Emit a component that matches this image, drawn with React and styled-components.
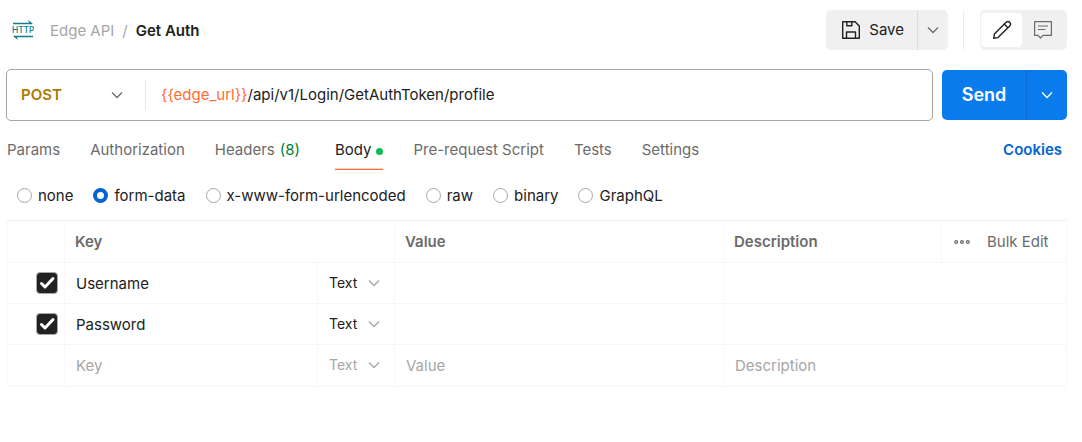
import React from 'react';
import styled, { createGlobalStyle, css } from 'styled-components';

const GlobalStyle = createGlobalStyle`
  *, *::before, *::after { box-sizing: border-box; }
  body {
    margin: 0;
    background: #fff;
    color: #212121;
    font: 400 15px/20px Inter, "Liberation Sans", sans-serif;
  }
  button, input, select { font: inherit; color: inherit; margin: 0; }
  button { border: 0; padding: 0; background: none; cursor: pointer; }
`;

const Page = styled.main`
  padding: 10px 15px 0 7px;
`;

const TopBar = styled.header`
  display: flex;
  align-items: center;
  height: 40px;
`;

const Breadcrumb = styled.nav`
  display: flex;
  align-items: center;
  gap: 8px;
  flex: 1;
  padding-top: 2px;
  color: #a6a6a6;
`;

const ProtocolIcon = styled.svg`
  width: 22px;
  height: 22px;
  margin: 0 8px 2px 5px;
  color: #0b7f8f;
`;

const CrumbLink = styled.a`
  color: inherit;
  text-decoration: none;
`;

const CrumbCurrent = styled.span`
  color: #212121;
  font-weight: 600;
`;

const SaveGroup = styled.div`
  display: flex;
  height: 40px;
  border-radius: 5px;
  background: #f0f0f0;
`;

const SaveButton = styled.button`
  display: flex;
  align-items: center;
  gap: 8px;
  padding: 0 13px 0 15px;
`;

const SaveMenu = styled.button`
  display: grid;
  place-items: center;
  width: 31px;
  border-left: 1px solid #dcdcdc;
  color: #6b6b6b;
`;

const Separator = styled.span`
  width: 1px;
  height: 40px;
  margin: 0 16px 0 15px;
  background: #ededed;
`;

const ViewToggle = styled.div`
  display: flex;
  padding: 3px 3px 3px 1px;
  height: 40px;
  border-radius: 5px;
  background: #f0f0f0;
`;

const ViewButton = styled.button`
  display: grid;
  place-items: center;
  width: ${(p) => (p.$active ? 41 : 42)}px;
  border-radius: 4px;
  background: ${(p) => (p.$active ? '#fff' : 'transparent')};
  color: ${(p) => (p.$active ? '#212121' : '#6b6b6b')};
`;

const RequestRow = styled.form`
  display: flex;
  align-items: center;
  gap: 9px;
  margin: 19px 0 0 -1px;
`;

const UrlBox = styled.div`
  display: flex;
  align-items: center;
  flex: 1;
  height: 52px;
  border: 1px solid #a6a6a6;
  border-radius: 5px;
`;

const SelectWrap = styled.label`
  display: flex;
  align-items: center;
  position: relative;
  height: 40px;
  color: #a6a6a6;
  svg {
    position: absolute;
    right: ${(p) => (p.$method ? 22 : 14)}px;
    pointer-events: none;
  }
  ${(p) => p.$method && css`
    width: 139px;
    height: 30px;
    border-right: 1px solid #e6e6e6;
    color: #6b6b6b;
  `}
`;

const Select = styled.select`
  appearance: none;
  width: 100%;
  border: 0;
  outline: 0;
  background: transparent;
  padding: 0 0 0 ${(p) => (p.$method ? 14 : 11)}px;
  ${(p) => (p.$method
    ? css`color: #ad7a03; font-weight: 600;`
    : css`color: ${p.$muted ? '#a6a6a6' : '#212121'}; font-size: 14px;`)}
`;

const UrlText = styled.div`
  flex: 1;
  padding-left: 15px;
  outline: 0;
`;

const Variable = styled.span`
  color: #ff6c37;
`;

const SendGroup = styled.div`
  display: flex;
  height: 50px;
  border-radius: 5px;
  background: #097bed;
  color: #fff;
`;

const SendButton = styled.button`
  width: 84px;
  font-size: 18px;
  font-weight: 600;
`;

const SendMenu = styled.button`
  display: grid;
  place-items: center;
  width: 41px;
  border-left: 1px solid #0a6bd0;
`;

const Tabs = styled.nav`
  display: flex;
  gap: 30px;
  margin-top: 19px;
`;

const Tab = styled.a`
  display: flex;
  align-items: center;
  gap: 5px;
  height: 30px;
  padding-bottom: 9px;
  color: ${(p) => (p.$active ? '#212121' : '#6b6b6b')};
  border-bottom: 1px solid ${(p) => (p.$active ? '#ff6c37' : 'transparent')};
  box-shadow: ${(p) => (p.$active ? 'inset 0 -1px #ffd3c3' : 'none')};
  text-decoration: none;
`;

const Count = styled.span`
  margin-right: 5px;
  color: #007f31;
`;

const Dot = styled.span`
  width: 7px;
  height: 7px;
  margin-top: 2px;
  border-radius: 50%;
  background: #0cbb52;
`;

const CookiesLink = styled.a`
  margin: 0 5px 0 auto;
  color: #0265d2;
  font-weight: 600;
  text-decoration: none;
`;

const BodyTypes = styled.fieldset`
  display: flex;
  gap: 20px;
  margin: 16px 0 0;
  padding: 0 0 0 10px;
  border: 0;
`;

const RadioLabel = styled.label`
  display: flex;
  align-items: center;
  gap: 6px;
`;

const Radio = styled.input`
  appearance: none;
  width: 15px;
  height: 15px;
  margin-bottom: 2px;
  border: 1px solid #a6a6a6;
  border-radius: 50%;
  background: #fff;
  &:checked { border: 4px solid #0265d2; }
`;

const Table = styled.table`
  width: 100%;
  margin-top: 14px;
  table-layout: fixed;
  border-collapse: collapse;
  border: 1px solid #ededed;
`;

const Col = styled.col`
  width: ${(p) => p.$width};
`;

const Row = styled.tr`
  height: 41px;
  &:last-child { height: 42px; }
`;

const HeadCell = styled.th`
  height: 42px;
  padding: 0 0 0 10px;
  border: 1px solid #f7f7f7;
  border-top-color: #ededed;
  color: #6b6b6b;
  font-weight: ${(p) => (p.$plain ? 400 : 600)};
  text-align: left;
`;

const Cell = styled.td`
  padding: 0;
  border: 1px solid #f7f7f7;
  vertical-align: top;
`;

const CheckCell = styled(Cell)`
  padding-left: 28px;
  vertical-align: middle;
`;

const Check = styled.label`
  display: grid;
  width: 22px;
  height: 22px;
  > * { grid-area: 1 / 1; }
  svg { pointer-events: none; }
`;

const CheckInput = styled.input`
  appearance: none;
  width: 22px;
  height: 22px;
  border: 1px solid #a6a6a6;
  border-radius: 4px;
  background: #fff;
  &:checked { background: #212121; }
`;

const CellInput = styled.input`
  display: block;
  width: 100%;
  height: 40px;
  padding: 0 11px;
  border: 0;
  outline: 0;
  background: transparent;
  &::placeholder { color: #a6a6a6; opacity: 1; }
`;

const Actions = styled.div`
  display: flex;
  align-items: center;
  gap: 17px;
  padding-left: 2px;
`;

const PlainButton = styled.button`
  display: flex;
  color: #6b6b6b;
`;

const Chevron = () => (
  <svg width="12" height="12" viewBox="0 0 12 12" fill="none" stroke="currentColor" strokeWidth="1.3" aria-hidden="true">
    <path d="M1 3.5 6 8.5l5-5" />
  </svg>
);

const HttpIcon = () => (
  <ProtocolIcon viewBox="0 0 22 22" aria-label="HTTP" fill="none" stroke="currentColor" strokeWidth="1.3">
    <path d="M1 4.500H20M21 17.500H2" />
    <path d="M16 1 21 5.100H17.500zM6 21 1 16.900H4.500z" fill="currentColor" stroke="none" />
    <text x="11" y="14" textAnchor="middle" fill="currentColor" stroke="none" fontFamily="'Noto Sans', sans-serif" fontSize="9" fontWeight="500">HTTP</text>
  </ProtocolIcon>
);

const SaveIcon = () => (
  <svg width="20" height="20" viewBox="0 0 20 20" fill="none" stroke="currentColor" strokeWidth="1.4" strokeLinejoin="round" aria-hidden="true">
    <path d="M1.700 1.700h12.300L18.300 6v12.300H1.700zM5.800 1.700v4h5v-4M5.500 18.300v-6.300h9v6.300" />
  </svg>
);

const PencilIcon = () => (
  <svg width="20" height="20" viewBox="0 0 20 20" fill="none" stroke="currentColor" strokeWidth="1.400" strokeLinejoin="round" aria-hidden="true">
    <path d="M1.700 18.300l.7-4.300L14.100 2.300a2.500 2.500 0 0 1 3.600 3.600L6 17.600zM12.300 4.100l3.600 3.600" />
  </svg>
);

const CommentIcon = () => (
  <svg width="20" height="20" viewBox="0 0 20 20" fill="none" stroke="currentColor" strokeWidth="1.200" strokeLinejoin="round" aria-hidden="true">
    <path d="M1.600 1.600h16.800v13.800H10L7.500 18 5 15.400H1.600zM5 6h10M5 9.500h7.500" />
  </svg>
);

const TickIcon = () => (
  <svg width="22" height="22" viewBox="0 0 22 22" fill="none" stroke="#fff" strokeWidth="3" strokeLinecap="round" strokeLinejoin="round" aria-hidden="true">
    <path d="M5.500 11.500 9 15l8-8.500" />
  </svg>
);

const DotsIcon = () => (
  <svg width="16" height="6" viewBox="0 0 16 6" fill="none" stroke="currentColor" strokeWidth="1.300" aria-hidden="true">
    <circle cx="2.200" cy="3" r="1.400" /><circle cx="8" cy="3" r="1.400" /><circle cx="13.800" cy="3" r="1.400" />
  </svg>
);

const bodyTypes = ['none', 'form-data', 'x-www-form-urlencoded', 'raw', 'binary', 'GraphQL'];
const rows = [{ key: 'Username' }, { key: 'Password' }, { key: '' }];

export default function App() {
  return (
    <Page>
      <GlobalStyle />
      <TopBar>
        <Breadcrumb aria-label="Breadcrumb">
          <HttpIcon />
          <CrumbLink href="#edge-api">Edge API</CrumbLink>
          <span>/</span>
          <CrumbCurrent>Get Auth</CrumbCurrent>
        </Breadcrumb>
        <SaveGroup>
          <SaveButton><SaveIcon />Save</SaveButton>
          <SaveMenu aria-label="Save options"><Chevron /></SaveMenu>
        </SaveGroup>
        <Separator />
        <ViewToggle>
          <ViewButton $active aria-label="Edit"><PencilIcon /></ViewButton>
          <ViewButton aria-label="Comments"><CommentIcon /></ViewButton>
        </ViewToggle>
      </TopBar>

      <RequestRow onSubmit={(e) => e.preventDefault()}>
        <UrlBox>
          <SelectWrap $method>
            <Select $method aria-label="Method"><option>POST</option></Select>
            <Chevron />
          </SelectWrap>
          <UrlText role="textbox" aria-label="Request URL" contentEditable suppressContentEditableWarning spellCheck={false}>
            <Variable>{'{{edge_url}}'}</Variable>/api/v1/Login/GetAuthToken/profile
          </UrlText>
        </UrlBox>
        <SendGroup>
          <SendButton type="submit">Send</SendButton>
          <SendMenu type="button" aria-label="Send options"><Chevron /></SendMenu>
        </SendGroup>
      </RequestRow>

      <Tabs aria-label="Request sections">
        <Tab href="#params">Params</Tab>
        <Tab href="#authorization">Authorization</Tab>
        <Tab href="#headers">Headers <Count>(8)</Count></Tab>
        <Tab href="#body" $active aria-current="page">Body<Dot /></Tab>
        <Tab href="#pre-request">Pre-request Script</Tab>
        <Tab href="#tests">Tests</Tab>
        <Tab href="#settings">Settings</Tab>
        <CookiesLink href="#cookies">Cookies</CookiesLink>
      </Tabs>

      <BodyTypes aria-label="Body type">
        {bodyTypes.map((type) => (
          <RadioLabel key={type}>
            <Radio type="radio" name="body-type" defaultChecked={type === 'form-data'} />
            {type}
          </RadioLabel>
        ))}
      </BodyTypes>

      <Table>
        <colgroup>
          <Col $width="57px" />
          <Col $width="253px" />
          <Col $width="77px" />
          <Col />
          <Col $width="218px" />
          <Col $width="125px" />
        </colgroup>
        <thead>
          <Row as="tr">
            <HeadCell aria-label="Enabled" />
            <HeadCell colSpan={2}>Key</HeadCell>
            <HeadCell>Value</HeadCell>
            <HeadCell>Description</HeadCell>
            <HeadCell as="td" $plain>
              <Actions>
                <PlainButton aria-label="More options"><DotsIcon /></PlainButton>
                <PlainButton>Bulk Edit</PlainButton>
              </Actions>
            </HeadCell>
          </Row>
        </thead>
        <tbody>
          {rows.map(({ key }) => (
            <Row key={key}>
              <CheckCell>
                {key && (
                  <Check>
                    <CheckInput type="checkbox" defaultChecked aria-label={`Include ${key}`} />
                    <TickIcon />
                  </Check>
                )}
              </CheckCell>
              <Cell><CellInput aria-label="Key" defaultValue={key} placeholder="Key" /></Cell>
              <Cell>
                <SelectWrap>
                  <Select $muted={!key} aria-label="Type"><option>Text</option></Select>
                  <Chevron />
                </SelectWrap>
              </Cell>
              <Cell><CellInput aria-label="Value" placeholder={key ? '' : 'Value'} /></Cell>
              <Cell colSpan={2}><CellInput aria-label="Description" placeholder={key ? '' : 'Description'} /></Cell>
            </Row>
          ))}
        </tbody>
      </Table>
    </Page>
  );
}
